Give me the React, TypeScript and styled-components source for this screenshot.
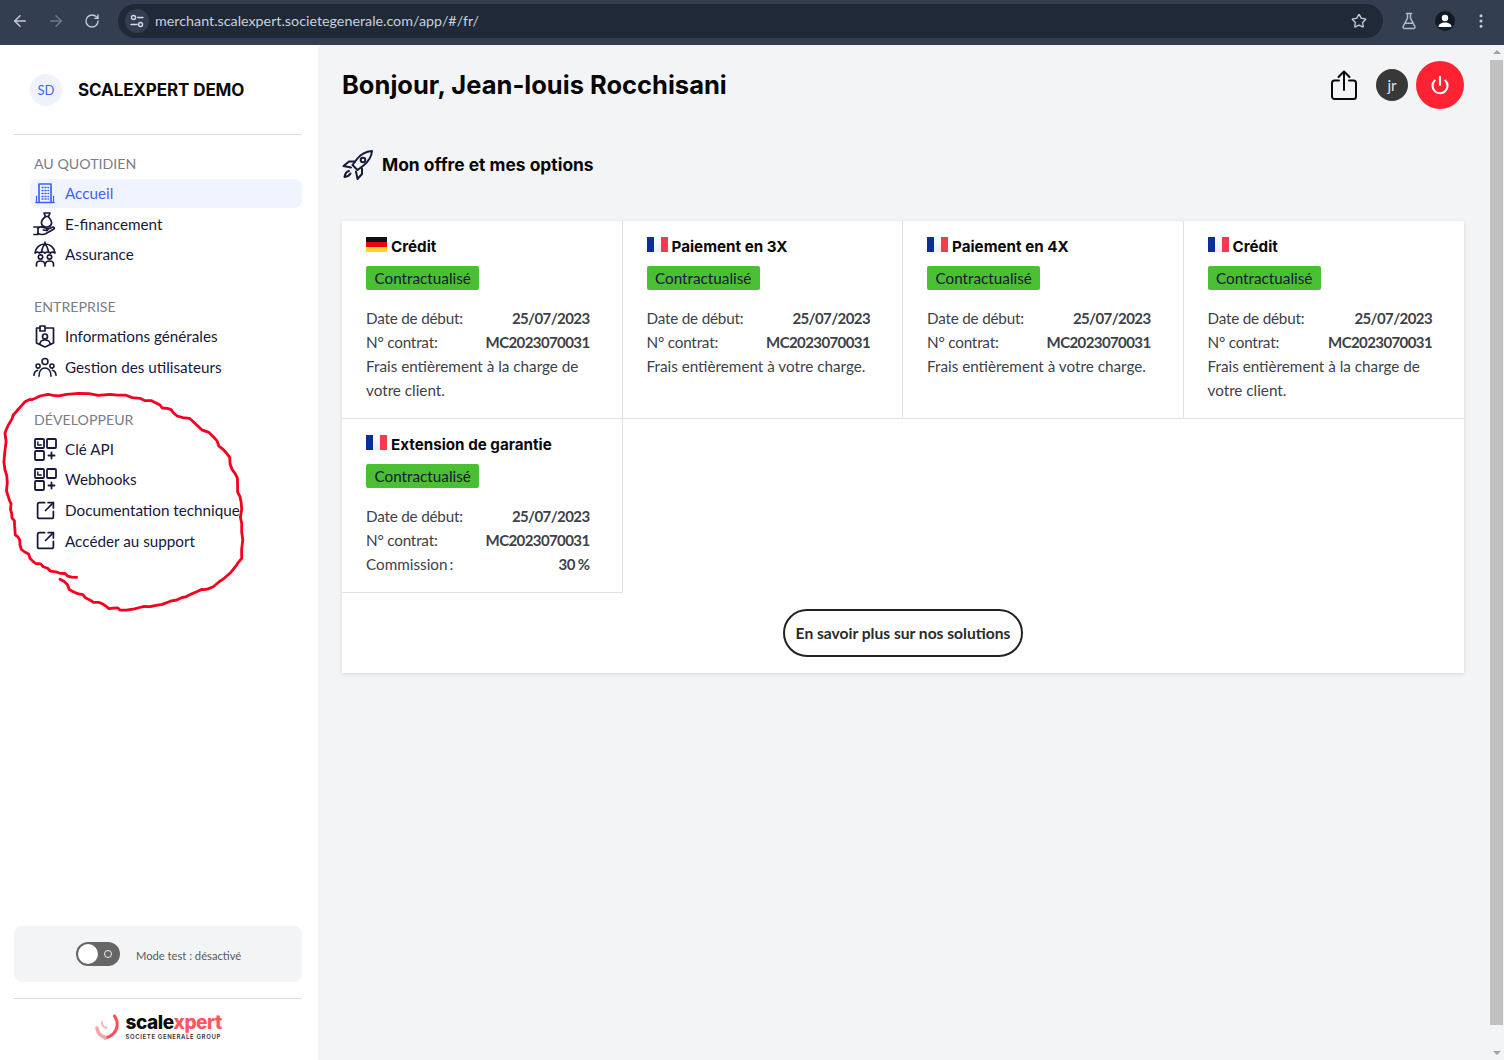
import React from "react";
import styled, { createGlobalStyle } from "styled-components";
import { ArrowLeft, ArrowRight, RotateCw, Star, FlaskConical, EllipsisVertical, Power, SquareArrowOutUpRight } from "lucide-react";

const BODY = '"Lato", "Noto Sans", sans-serif';
const HEAD = '"Inter", "Liberation Sans", sans-serif';
const NAVY = "#16183c";

const Global = createGlobalStyle`
  html, body { margin: 0; padding: 0; background: #fff; overflow: hidden; }
  #root { width: 1504px; height: 1060px; }
  * { box-sizing: border-box; }
`;

const Page = styled.div`
  position: relative; width: 1504px; height: 1060px; display: flex; flex-direction: column;
  font-family: ${BODY}; overflow: hidden; background: #fff;
`;

/* Browser chrome */
const Chrome = styled.div`
  height: 45px; flex: none; background: #333f50; display: flex; align-items: center; padding: 0 0 3px 11px; color: #c4ccd8;
`;
const ChromeBtn = styled.div<{ $dim?: boolean }>`
  width: 18px; height: 18px; margin-right: 18px; display: flex; align-items: center; justify-content: center;
  color: ${p => (p.$dim ? "#6f7a8a" : "#c4ccd8")}; flex: none;
`;
const Omnibox = styled.div`
  width: 1265px; height: 34px; margin-left: -1px; border-radius: 17px; background: #1f2937; display: flex; align-items: center; padding: 0 16px 0 7px; flex: none;
`;
const SiteChip = styled.div`
  width: 24px; height: 24px; border-radius: 50%; background: #333f50; display: flex; align-items: center; justify-content: center; flex: none;
`;
const Url = styled.div`
  margin-left: 6px; flex: 1; font-family: ${BODY}; font-size: 14.3px; color: #c9d1dc; white-space: nowrap; padding-bottom: 1px;
`;
const ChromeRight = styled.div`
  display: flex; align-items: center; margin-left: 17px; gap: 17px;
`;
const ProfileDot = styled.div`
  width: 20px; height: 20px; border-radius: 50%; background: #111a28; display: flex; align-items: center; justify-content: center; flex: none;
`;

/* App */
const Body = styled.div`
  flex: 1; display: flex; min-height: 0;
`;
const Sidebar = styled.aside`
  width: 318px; flex: none; display: flex; flex-direction: column; padding: 29px 16px 0 14px; background: #fff;
`;
const Brand = styled.div`
  display: flex; align-items: center; height: 32px; padding-left: 16px; gap: 16px;
`;
const BrandAvatar = styled.div`
  width: 32px; height: 32px; border-radius: 50%; background: #f0f2fb; color: #3d68ee; font-size: 13px; display: flex; align-items: center; justify-content: center;
`;
const BrandName = styled.div`
  font-family: ${HEAD}; font-weight: 700; font-size: 17px; color: #0a0a0a; letter-spacing: -0.1px; white-space: nowrap; padding-bottom: 1px;
`;
const Rule = styled.div<{ $top: number }>`
  height: 1px; background: #dcdcdc; margin-top: ${p => p.$top}px; flex: none;
`;
const Nav = styled.nav`
  margin: 19px 0 0 16px; display: flex; flex-direction: column;
`;
const Section = styled.div`
  display: flex; flex-direction: column; gap: 1.75px; & + & { margin-top: 27.5px; }
`;
const SectionLabel = styled.div`
  height: 20px; line-height: 20px; font-size: 14.2px; color: #7a7d85; padding-left: 4px; margin-bottom: 3.5px; white-space: nowrap;
`;
const Item = styled.div<{ $active?: boolean }>`
  height: 29px; display: flex; align-items: center; gap: 8px; padding: 0 0 2px 3px; border-radius: 8px; white-space: nowrap; font-size: 15.25px;
  background: ${p => (p.$active ? "#eff4fe" : "transparent")};
  color: ${p => (p.$active ? "#3f62f0" : NAVY)};
  svg { flex: none; }
`;
const LinkIcon = styled(SquareArrowOutUpRight)`
  width: 21px; height: 21px; margin: 0 1px 0 2px;
`;
const TestBox = styled.div`
  margin-top: auto; height: 56px; flex: none; background: #f3f4f6; border-radius: 8px; display: flex; align-items: center; padding-left: 62px; gap: 16px;
`;
const Toggle = styled.div`
  position: relative; width: 44px; height: 24px; border-radius: 12px; background: #666; flex: none;
`;
const Knob = styled.div`
  position: absolute; left: 2px; top: 2px; width: 20px; height: 20px; border-radius: 50%; background: #fff;
`;
const Ring = styled.div`
  position: absolute; right: 8px; top: 8px; width: 8px; height: 8px; border-radius: 50%; border: 1px solid #eee;
`;
const TestText = styled.div`
  font-size: 11.2px; color: #555a63; white-space: nowrap; padding-top: 2px;
`;
const LogoRow = styled.div`
  height: 61px; flex: none; display: flex; align-items: flex-start; justify-content: center; gap: 5px; padding: 15px 0 0 0;
`;
const LogoWords = styled.div`
  display: flex; flex-direction: column; width: 96px;
`;
const LogoName = styled.div`
  font-family: ${HEAD}; font-weight: 800; font-size: 19px; line-height: 18px; letter-spacing: -0.4px; color: #0c0c0c; white-space: nowrap;
`;
const LogoAccent = styled.span`
  color: #fb5560;
`;
const LogoSub = styled.div`
  font-family: ${HEAD}; font-weight: 600; font-size: 6px; line-height: 8px; margin-top: 1px; color: #333; white-space: nowrap; letter-spacing: 0.62px;
`;

const Main = styled.main`
  flex: 1; min-width: 0; background: #f3f4f6; padding: 16px 25px 0 24px; border-top-left-radius: 4px;
`;
const TopRow = styled.header`
  display: flex; align-items: center; height: 48px;
`;
const Title = styled.h1`
  margin: 0; flex: 1; font-family: ${HEAD}; font-weight: 700; font-size: 25.5px; color: #060606; white-space: nowrap; padding-bottom: 2px;
`;
const ShareBtn = styled.div`
  width: 28px; height: 34px; margin-right: 18px; display: flex; align-items: center; justify-content: center; color: #0a0a0a;
`;
const UserDot = styled.div`
  width: 32px; height: 32px; border-radius: 50%; background: #383838; color: #dfe6ef; font-size: 15px; display: flex; align-items: center; justify-content: center; margin-right: 8px;
`;
const PowerBtn = styled.div`
  width: 48px; height: 48px; border-radius: 50%; background: #ff2233; color: #fff; display: flex; align-items: center; justify-content: center;
`;
const OfferHead = styled.div`
  display: flex; align-items: center; height: 30px; margin-top: 41px; gap: 8px;
`;
const OfferTitle = styled.h2`
  margin: 0; font-family: ${HEAD}; font-weight: 700; font-size: 17.4px; color: #080808; white-space: nowrap; padding-bottom: 1px;
`;
const Panel = styled.section`
  margin-top: 41px; background: #fff; box-shadow: 0 1px 4px rgba(0, 0, 0, 0.12);
`;
const CardGrid = styled.div`
  display: grid; grid-template-columns: repeat(4, 1fr); grid-template-rows: 198px 174px;
`;
const Card = styled.article<{ $last?: boolean }>`
  padding: 16px 32px 0 24px; border-bottom: 1px solid #e2e2e2; border-right: ${p => (p.$last ? "none" : "1px solid #e2e2e2")};
`;
const CardHead = styled.div`
  display: flex; align-items: flex-start; gap: 4px; height: 18px;
`;
const CardTitle = styled.h3`
  margin: 0; font-family: ${HEAD}; font-weight: 700; font-size: 15.2px; line-height: 20px; color: #0a0a0a; white-space: nowrap;
`;
const Badge = styled.div`
  display: inline-block; margin-top: 11px; height: 24px; line-height: 24px; padding: 0 8.5px; background: #4abf33; border-radius: 2px; color: #15183a; font-size: 15.25px; white-space: nowrap;
`;
const Rows = styled.div`
  margin-top: 16px; font-size: 15.25px; line-height: 24px; color: #3d4148;
`;
const Row = styled.div`
  display: flex; justify-content: space-between; white-space: nowrap;
`;
const Label = styled.span<{ $tight?: boolean }>`
  letter-spacing: ${p => (p.$tight ? "-0.2px" : "0")};
`;
const Value = styled.span`
  font-weight: 700; font-size: 15px; letter-spacing: -0.6px;
`;
const Cta = styled.div`
  height: 80px; display: flex; align-items: center; justify-content: center;
`;
const CtaBtn = styled.div`
  width: 240px; height: 48px; border: 2px solid #222; border-radius: 24px; display: flex; align-items: center; justify-content: center; font-weight: 700; font-size: 15.6px; color: #2a2a2a; white-space: nowrap;
`;

const ScrollTrack = styled.div`
  width: 15px; flex: none; background: #f3f4f6; display: flex; flex-direction: column; align-items: center; padding-top: 5px;
`;
const ArrowUp = styled.div`
  width: 0; height: 0; border-left: 4px solid transparent; border-right: 4px solid transparent; border-bottom: 4px solid #a3a3a3; flex: none;
`;
const ArrowDown = styled.div`
  width: 0; height: 0; border-left: 4px solid transparent; border-right: 4px solid transparent; border-top: 4px solid #a3a3a3; flex: none; margin-top: 26px;
`;
const Thumb = styled.div`
  width: 13px; height: 965px; background: #c1c1c1; margin-top: 6px; flex: none;
`;
const Scribble = styled.svg`
  position: absolute; left: 0; top: 0; pointer-events: none;
`;

const Flag = ({ c }: { c: "fr" | "de" }) =>
  c === "fr" ? (
    <svg width="21" height="15" viewBox="0 0 21 15" style={{ flex: "none" }}>
      <defs>
        <linearGradient id="frw" x1="0" x2="0" y1="0" y2="1">
          <stop offset="0" stopColor="#fff" />
          <stop offset="1" stopColor="#eceef2" />
        </linearGradient>
      </defs>
      <rect width="7" height="15" fill="#0a2f9c" />
      <rect x="7" width="7" height="15" fill="url(#frw)" />
      <rect x="14" width="7" height="15" fill="#f93a4e" />
    </svg>
  ) : (
    <svg width="21" height="15" viewBox="0 0 21 15" style={{ flex: "none" }}>
      <rect width="21" height="5" fill="#111" />
      <rect y="5" width="21" height="5" fill="#e30613" />
      <rect y="10" width="21" height="5" fill="#ffcf33" />
    </svg>
  );

const ic = { fill: "none", stroke: "currentColor", strokeWidth: 1.7, strokeLinecap: "round", strokeLinejoin: "round" } as const;

const BuildingIcon = () => (
  <svg width="24" height="24" viewBox="0 0 24 24" {...ic}>
    <path d="M6 21V3h12v18" />
    <path d="M3 21.500h18" />
    <path d="M3.500 21v-6M20.500 21v-6" strokeWidth="1.200" />
    <path d="M9 6.500h1M12 6.500h1M15 6.500h.5M9 9.500h1M12 9.500h1M15 9.500h.5M9 12.500h1M12 12.500h1M15 12.500h.5M9 15.500h1M12 15.500h1M15 15.500h.5M9 18h1M12 18h1M15 18h.5" strokeWidth="1.500" />
  </svg>
);
const HandBagIcon = () => (
  <svg width="24" height="26" viewBox="0 0 24 26" {...ic}>
    <path d="M11 2h6l-1.500 3.500h-3z" />
    <path d="M12.500 5.500C9.500 8 8 10 8.500 12.500c.5 2.500 2.500 3.500 5 3.500s4.500-1 5-3.500c.5-2.500-1-4.500-3.500-7" />
    <path d="M1 16h4v7.500H1" />
    <path d="M5 17c2-1.500 3.500-1.500 5.500-.5l3.500 1c1.200.5.8 2.300-.7 2l-3-.5" />
    <path d="M5 22.500c3 1.500 5 1.500 8 0l8-4.500c1-1-.3-2.300-1.500-1.800L14 18.500" />
  </svg>
);
const UmbrellaIcon = () => (
  <svg width="24" height="26" viewBox="0 0 24 26" {...ic}>
    <path d="M12 1v2" />
    <path d="M2 12c.5-5 4.500-9 10-9s9.500 4 10 9c-1.500-1.300-3-1.300-4.500 0-1.500-1.300-4-1.300-5.500 0-1.500-1.300-4-1.300-5.500 0C5 10.700 3.500 10.700 2 12z" />
    <path d="M8.500 11.500c.5-4 1.500-6.500 3.500-8.500 2 2 3 4.500 3.500 8.500" />
    <circle cx="7.500" cy="16" r="2.200" />
    <circle cx="16.500" cy="16" r="2.200" />
    <path d="M3.500 25v-2c0-2 1.500-3 4-3s4 1 4.500 3c.5-2 2-3 4.500-3s4 1 4 3v2" />
    <path d="M12 23v2" />
  </svg>
);
const CompanyIcon = () => (
  <svg width="24" height="24" viewBox="0 0 24 24" {...ic}>
    <path d="M7 4H3.500v15l8.500 4 8.500-4V4H13" />
    <path d="M7 2h5v5H7z" />
    <circle cx="12" cy="12.500" r="2.500" />
    <path d="M6.800 20c.4-2.800 2.500-4 5.200-4s4.800 1.200 5.200 4" />
  </svg>
);
const TeamIcon = () => (
  <svg width="24" height="24" viewBox="0 0 26 26" {...ic}>
    <circle cx="13" cy="7" r="3.200" />
    <circle cx="5.500" cy="12" r="2.200" />
    <circle cx="20.500" cy="12" r="2.200" />
    <path d="M6.500 23c0-6 3-9 6.500-9s6.500 3 6.500 9" />
    <path d="M1 22c.3-3 1.800-5 4-5.500M25 22c-.3-3-1.800-5-4-5.500" />
  </svg>
);
const WidgetIcon = () => (
  <svg width="24" height="24" viewBox="0 0 24 24" {...ic} strokeWidth="1.800">
    <rect x="2" y="2" width="9" height="9" rx="1" />
    <rect x="14" y="2" width="9" height="9" rx="1" />
    <rect x="2" y="14" width="9" height="9" rx="1" />
    <path d="M18.500 15.500v6M15.500 18.500h6" />
    <path d="M4.800 5v3h3.500" strokeWidth="1.400" />
  </svg>
);
const RocketIcon = () => (
  <svg width="32" height="30" viewBox="0 0 32 30" fill="none" stroke={NAVY} strokeWidth="2" strokeLinecap="round" strokeLinejoin="round">
    <path d="M30 1c-6 .5-11 3-15 8l-4.500 6 5 5 6-4.500c5-4 8-9 8.500-14.500z" />
    <circle cx="21" cy="10" r="2.300" />
    <path d="M13 11.500H7L1.500 16l7.500 1.500" />
    <path d="M20 18.500v5.500L15.500 29 14 21.500" />
    <path d="M7 21c-2 .5-4 2.500-4.500 6 3-.3 5-1.500 6-3.500" />
  </svg>
);
const ShareIcon = () => (
  <svg width="26" height="30" viewBox="0 0 26 30" fill="none" stroke="currentColor" strokeWidth="2" strokeLinecap="round" strokeLinejoin="round">
    <path d="M13 20V2M7.500 7 13 1.500 18.500 7" />
    <path d="M8 10.500H3.500A2.500 2.500 0 0 0 1 13v13.500A2.500 2.500 0 0 0 3.500 29h19a2.500 2.500 0 0 0 2.500-2.500V13a2.500 2.500 0 0 0-2.500-2.500H18" />
  </svg>
);
const SiteIcon = () => (
  <svg width="14" height="14" viewBox="0 0 14 14" fill="none" stroke="#d5dbe4" strokeWidth="1.400" strokeLinecap="round">
    <circle cx="3.500" cy="3.500" r="2" />
    <path d="M7.500 3.500H13M1 10.500h6" />
    <circle cx="10.500" cy="10.500" r="2" />
  </svg>
);
const PersonIcon = () => (
  <svg width="16" height="16" viewBox="0 0 16 16" fill="#fff">
    <circle cx="8" cy="5" r="3.200" />
    <path d="M1.500 14c0-3 3-4.500 6.500-4.500s6.500 1.500 6.500 4.500z" />
  </svg>
);
const LogoMark = () => (
  <svg width="26" height="26" viewBox="0 0 26 26" fill="none" strokeLinecap="round" style={{ flex: "none" }}>
    <path d="M19.500 2c4 5.500 3.500 13-1 17.500-2.500 2.500-5 4-8.500 4.500" stroke="#f8505a" strokeWidth="3" />
    <path d="M2 14c.5 4 3.500 8 8 9.500" stroke="#fca3a3" strokeWidth="3.500" />
    <path d="M7 8c-.5 3 1.500 5.500 4.500 6" stroke="#fcb4b4" strokeWidth="2" />
  </svg>
);

type CardData = { flag: "fr" | "de"; title: string; lines: string; extra?: string };
const cards: CardData[] = [
  { flag: "de", title: "Crédit", lines: "Frais entièrement à la charge de votre client." },
  { flag: "fr", title: "Paiement en 3X", lines: "Frais entièrement à votre charge." },
  { flag: "fr", title: "Paiement en 4X", lines: "Frais entièrement à votre charge." },
  { flag: "fr", title: "Crédit", lines: "Frais entièrement à la charge de votre client." },
  { flag: "fr", title: "Extension de garantie", lines: "", extra: "30 %" },
];

const pts: [number, number][] = [
  [230,562],[180,550],[130,530],[90,505],[60,465],[45,420],[35,370],[25,320],[15,240],[15,130],[40,75],[75,35],[120,18],[200,13],[330,13],[420,25],[480,45],[520,68],[580,95],[640,140],[680,190],[705,250],[720,320],[725,400],[725,505],[690,550],[640,590],[590,605],[530,630],[450,650],[360,660],[320,650],[270,630],[220,605],[180,568],
];
const scribble = pts
  .flatMap(([x, y], i) => {
    if (i === 0) return [[x, y]];
    const [px, py] = pts[i - 1];
    const out: number[][] = [];
    for (let k = 1; k <= 4; k++) {
      const t = k / 4;
      const w = k === 4 ? 0 : Math.sin(i * 7 + k * 11) * 3.5;
      out.push([px + (x - px) * t + w, py + (y - py) * t - w]);
    }
    return out;
  })
  .map(([x, y], i) => `${i ? "L" : "M"}${(x / 3).toFixed(1)} ${(y / 3 + 390).toFixed(1)}`)
  .join(" ");

export default function App() {
  return (
    <Page>
      <Global />
      <Chrome>
        <ChromeBtn><ArrowLeft size={18} /></ChromeBtn>
        <ChromeBtn $dim><ArrowRight size={18} /></ChromeBtn>
        <ChromeBtn><RotateCw size={16} /></ChromeBtn>
        <Omnibox>
          <SiteChip><SiteIcon /></SiteChip>
          <Url>merchant.scalexpert.societegenerale.com/app/#/fr/</Url>
          <Star size={16} color="#c4ccd8" />
        </Omnibox>
        <ChromeRight>
          <FlaskConical size={18} color="#aeb8c6" />
          <ProfileDot><PersonIcon /></ProfileDot>
          <EllipsisVertical size={18} color="#c4ccd8" />
        </ChromeRight>
      </Chrome>
      <Body>
        <Sidebar>
          <Brand>
            <BrandAvatar>SD</BrandAvatar>
            <BrandName>SCALEXPERT DEMO</BrandName>
          </Brand>
          <Rule $top={28} />
          <Nav>
            <Section>
              <SectionLabel>AU QUOTIDIEN</SectionLabel>
              <Item $active><BuildingIcon />Accueil</Item>
              <Item><HandBagIcon />E-financement</Item>
              <Item><UmbrellaIcon />Assurance</Item>
            </Section>
            <Section>
              <SectionLabel>ENTREPRISE</SectionLabel>
              <Item><CompanyIcon />Informations générales</Item>
              <Item><TeamIcon />Gestion des utilisateurs</Item>
            </Section>
            <Section>
              <SectionLabel>DÉVELOPPEUR</SectionLabel>
              <Item><WidgetIcon />Clé API</Item>
              <Item><WidgetIcon />Webhooks</Item>
              <Item><LinkIcon strokeWidth={2} />Documentation technique</Item>
              <Item><LinkIcon strokeWidth={2} />Accéder au support</Item>
            </Section>
          </Nav>
          <TestBox>
            <Toggle><Knob /><Ring /></Toggle>
            <TestText>Mode test : désactivé</TestText>
          </TestBox>
          <Rule $top={16} />
          <LogoRow>
            <LogoMark />
            <LogoWords>
              <LogoName>scale<LogoAccent>xpert</LogoAccent></LogoName>
              <LogoSub>SOCIETE GENERALE GROUP</LogoSub>
            </LogoWords>
          </LogoRow>
        </Sidebar>
        <Main>
          <TopRow>
            <Title>Bonjour, Jean-louis Rocchisani</Title>
            <ShareBtn><ShareIcon /></ShareBtn>
            <UserDot>jr</UserDot>
            <PowerBtn><Power size={20} strokeWidth={2.5} /></PowerBtn>
          </TopRow>
          <OfferHead>
            <RocketIcon />
            <OfferTitle>Mon offre et mes options</OfferTitle>
          </OfferHead>
          <Panel>
            <CardGrid>
              {cards.map((c, i) => (
                <Card key={i} $last={i === 3}>
                  <CardHead><Flag c={c.flag} /><CardTitle>{c.title}</CardTitle></CardHead>
                  <Badge>Contractualisé</Badge>
                  <Rows>
                    <Row><Label $tight>Date de début:</Label><Value>25/07/2023</Value></Row>
                    <Row><Label $tight>N° contrat:</Label><Value>MC2023070031</Value></Row>
                    {c.extra ? <Row><Label>Commission{"\u2009"}:</Label><Value>{c.extra}</Value></Row> : <div>{c.lines}</div>}
                  </Rows>
                </Card>
              ))}
            </CardGrid>
            <Cta><CtaBtn>En savoir plus sur nos solutions</CtaBtn></Cta>
          </Panel>
        </Main>
        <ScrollTrack>
          <ArrowUp />
          <Thumb />
          <ArrowDown />
        </ScrollTrack>
      </Body>
      <Scribble width="1504" height="1060" viewBox="0 0 1504 1060" fill="none">
        <path d={scribble} stroke="#f5001e" strokeWidth="2.800" strokeLinejoin="round" strokeLinecap="round" />
      </Scribble>
    </Page>
  );
}
